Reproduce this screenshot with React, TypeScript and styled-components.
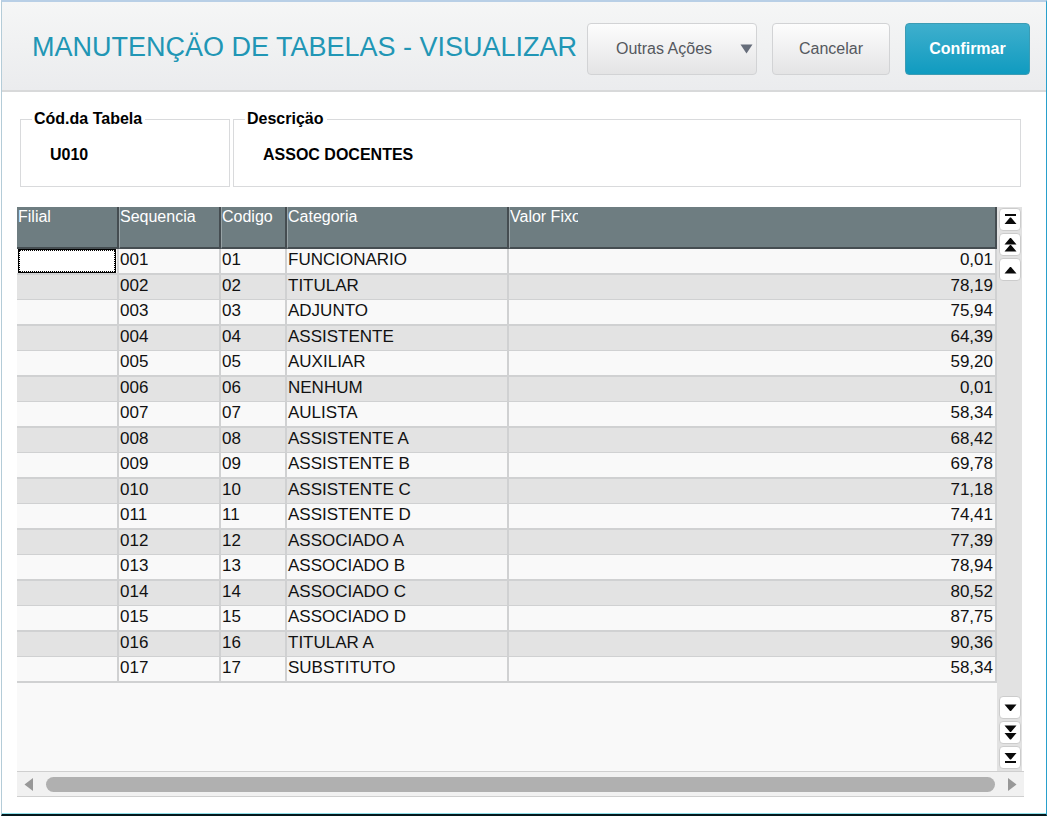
import React from "react";
import styled, { createGlobalStyle, css } from "styled-components";

const Global = createGlobalStyle`
  *, *::before, *::after { box-sizing: border-box; }
  html, body, #root { height: 100%; }
  body { margin: 0; background: #fff; font-family: "Liberation Sans", Arial, sans-serif; }
  button, input { font-family: inherit; margin: 0; }
`;

const Window = styled.main`
  min-height: 100%;
  display: flex;
  flex-direction: column;
  border-style: solid;
  border-width: 2px 1px 2px 1px;
  border-color: #b8cfe6 #29a0cc #04181c #b4ccd8;
  margin-left: 1px;
  background: #fff;
  box-shadow: inset 0 -1px 0 #8fe0ea;
`;

const Header = styled.header`
  display: flex;
  align-items: flex-start;
  justify-content: space-between;
  height: 90px;
  padding: 21px 16px 0 30px;
  border-bottom: 2px solid #d8d9da;
  background: linear-gradient(#f5f6f6, #ebecee);
`;

const Title = styled.h1`
  margin: 0;
  font-size: 27px;
  line-height: 48px;
  font-weight: 400;
  color: #2196b5;
  white-space: nowrap;
`;

const Actions = styled.div`
  display: flex;
  flex-shrink: 0;
  gap: 15px;
`;

const Button = styled.button<{ $primary?: boolean; $width: number }>`
  display: flex;
  align-items: center;
  justify-content: center;
  width: ${(p) => p.$width}px;
  height: 52px;
  padding: 0;
  border: 1px solid #d2d3d5;
  border-radius: 4px;
  background: linear-gradient(#fdfdfd, #e4e4e5);
  color: #55585e;
  font-size: 16px;
  ${(p) =>
    p.$primary &&
    css`
      border-color: #3c9cb4;
      background: linear-gradient(#3fafcd, #109bc0);
      color: #fff;
      font-weight: 700;
    `}
`;

const MenuButton = styled(Button)`
  justify-content: space-between;
  padding: 0 3px 0 28px;
`;

const Content = styled.div`
  flex: 1;
  display: flex;
  flex-direction: column;
  padding: 18px 22px 17px 15px;
`;

const Fields = styled.div`
  display: flex;
  gap: 3px;
  padding: 0 3px;
`;

const Field = styled.fieldset<{ $grow?: boolean }>`
  flex: ${(p) => (p.$grow ? "1" : "0 0 210px")};
  min-width: 0;
  height: 77px;
  margin: 0;
  padding: 17px 28px 0 29px;
  border: 1px solid #d9dadc;
`;

const Legend = styled.legend`
  margin-left: -18px;
  padding: 0 3px 0 2px;
  font-size: 16px;
  line-height: 18px;
  font-weight: 700;
  color: #000;
`;

const Value = styled.input`
  display: block;
  width: 100%;
  height: 20px;
  padding: 0;
  border: 0;
  outline: 0;
  background: transparent;
  font-size: 16px;
  font-weight: 700;
  color: #000;
`;

const Grid = styled.section`
  flex: 1;
  display: flex;
  flex-direction: column;
  margin-top: 20px;
`;

const GridBody = styled.div`
  flex: 1;
  display: flex;
  margin-right: 2px;
  background: #f9f9f9;
`;

const TableArea = styled.div`
  flex: 1;
  min-width: 0;
`;

const Table = styled.table`
  width: 100%;
  table-layout: fixed;
  border-collapse: separate;
  border-spacing: 0;
  font-size: 17px;
  color: #111;
`;

const Th = styled.th`
  height: 42px;
  padding: 0 0 0 1px;
  border-right: 2px solid #454d51;
  border-bottom: 2px solid #454d51;
  background: #6e7d81;
  color: #fff;
  font-size: 16px;
  font-weight: 400;
  line-height: 19px;
  text-align: left;
  vertical-align: top;
  white-space: nowrap;

  & + & {
    padding-left: 0;
    border-left: 1px solid #98a3a6;
  }
`;

const Clip = styled.span`
  display: block;
  width: 68px;
  overflow: hidden;
`;

const Row = styled.tr`
  height: 26px;
  background: #f9f9f9;

  & > td {
    border-bottom: 2px solid #d0d1d2;
  }
  &:nth-child(even) {
    height: 25px;
    background: #e3e3e3;
  }
  &:nth-child(even) > td {
    border-bottom-width: 1px;
  }
`;

const Td = styled.td<{ $right?: boolean }>`
  padding: 0 2px 2px 1px;
  border-right: 2px solid #d0d1d2;
  line-height: 20px;
  text-align: ${(p) => (p.$right ? "right" : "left")};
  white-space: nowrap;
`;

const FocusCell = styled(Td)`
  padding: 0 1px 0 1px;
`;

const Focus = styled.div`
  height: 24px;
  border: 1px solid #000;
  outline: 1px dotted #000;
  outline-offset: -2px;
  background: #fff;
`;

const VScroll = styled.div`
  flex: 0 0 25px;
  display: flex;
  flex-direction: column;
  justify-content: space-between;
  padding: 1px 1px 2px 2px;
  background: #e2e2e2;
`;

const ButtonStack = styled.div`
  display: flex;
  flex-direction: column;
  gap: 2px;
`;

const ScrollButton = styled.button`
  display: flex;
  align-items: center;
  justify-content: center;
  width: 22px;
  height: 23px;
  padding: 0;
  border: 1px solid #ccc;
  border-radius: 4px;
  background: #fff;
`;

const HScroll = styled.div`
  flex: 0 0 26px;
  display: flex;
  align-items: center;
  gap: 12px;
  padding: 0 7px;
  border-top: 1px solid #cfcfcf;
  border-bottom: 1px solid #cfcfcf;
  background: #f1f1f1;
`;

const ArrowButton = styled.button`
  display: flex;
  padding: 0;
  border: 0;
  background: transparent;
`;

const Thumb = styled.div`
  flex: 1;
  height: 15px;
  border-radius: 8px;
  background: #b0b0b0;
`;

const glyphs: Record<string, string> = {
  "Primeira linha": "M1 2h11v2H1z M6 5.500h1L12.500 12H0.500z",
  "Página anterior": "M6 1h1L12.500 7.500H0.500z M6 8h1L12.500 14.500H0.500z",
  "Linha anterior": "M6 5h1L12.500 11.500H0.500z",
  "Próxima linha": "M0.500 4.500h12L7 11H6z",
  "Próxima página": "M0.500 0.500h12L7 7H6z M0.500 8h12L7 14.500H6z",
  "Última linha": "M0.500 3h12L7 9.500H6z M1 11h11v2H1z",
};

const Scroll = ({ label }: { label: string }) => (
  <ScrollButton type="button" aria-label={label}>
    <svg width="13" height="15" viewBox="0 0 13 15" fill="#0a0a0a">
      <path d={glyphs[label]} />
    </svg>
  </ScrollButton>
);

const rows: [string, string][] = [
  ["FUNCIONARIO", "0,01"],
  ["TITULAR", "78,19"],
  ["ADJUNTO", "75,94"],
  ["ASSISTENTE", "64,39"],
  ["AUXILIAR", "59,20"],
  ["NENHUM", "0,01"],
  ["AULISTA", "58,34"],
  ["ASSISTENTE A", "68,42"],
  ["ASSISTENTE B", "69,78"],
  ["ASSISTENTE C", "71,18"],
  ["ASSISTENTE D", "74,41"],
  ["ASSOCIADO A", "77,39"],
  ["ASSOCIADO B", "78,94"],
  ["ASSOCIADO C", "80,52"],
  ["ASSOCIADO D", "87,75"],
  ["TITULAR A", "90,36"],
  ["SUBSTITUTO", "58,34"],
];

export default function App() {
  return (
    <>
      <Global />
      <Window>
        <Header>
          <Title>MANUTENÇÄO DE TABELAS - VISUALIZAR</Title>
          <Actions>
            <MenuButton type="button" $width={170} aria-haspopup="menu">
              Outras Ações
              <svg width="13" height="10" viewBox="0 0 13 10" fill="#666d7a">
                <path d="M0.500 0.500h12L6.500 9.500z" />
              </svg>
            </MenuButton>
            <Button type="button" $width={118}>Cancelar</Button>
            <Button type="button" $width={125} $primary>Confirmar</Button>
          </Actions>
        </Header>
        <Content>
          <Fields>
            <Field>
              <Legend><label htmlFor="codigo">Cód.da Tabela</label></Legend>
              <Value id="codigo" defaultValue="U010" readOnly />
            </Field>
            <Field $grow>
              <Legend><label htmlFor="descricao">Descriçäo</label></Legend>
              <Value id="descricao" defaultValue="ASSOC DOCENTES" readOnly />
            </Field>
          </Fields>
          <Grid>
            <GridBody>
              <TableArea>
                <Table>
                  <colgroup>
                    <col style={{ width: 102 }} />
                    <col style={{ width: 102 }} />
                    <col style={{ width: 66 }} />
                    <col style={{ width: 222 }} />
                    <col />
                  </colgroup>
                  <thead>
                    <tr>
                      <Th>Filial</Th>
                      <Th>Sequencia</Th>
                      <Th>Codigo</Th>
                      <Th>Categoria</Th>
                      <Th><Clip>Valor Fixo</Clip></Th>
                    </tr>
                  </thead>
                  <tbody>
                    {rows.map(([name, value], i) => {
                      const n = String(i + 1);
                      return (
                        <Row key={n}>
                          {i === 0 ? <FocusCell><Focus /></FocusCell> : <Td />}
                          <Td>{n.padStart(3, "0")}</Td>
                          <Td>{n.padStart(2, "0")}</Td>
                          <Td>{name}</Td>
                          <Td $right>{value}</Td>
                        </Row>
                      );
                    })}
                  </tbody>
                </Table>
              </TableArea>
              <VScroll>
                <ButtonStack>
                  <Scroll label="Primeira linha" />
                  <Scroll label="Página anterior" />
                  <Scroll label="Linha anterior" />
                </ButtonStack>
                <ButtonStack>
                  <Scroll label="Próxima linha" />
                  <Scroll label="Próxima página" />
                  <Scroll label="Última linha" />
                </ButtonStack>
              </VScroll>
            </GridBody>
            <HScroll>
              <ArrowButton type="button" aria-label="Rolar para a esquerda">
                <svg width="10" height="13" viewBox="0 0 10 13" fill="#989898">
                  <path d="M9 0v13L0.500 6.500z" />
                </svg>
              </ArrowButton>
              <Thumb />
              <ArrowButton type="button" aria-label="Rolar para a direita">
                <svg width="10" height="13" viewBox="0 0 10 13" fill="#989898">
                  <path d="M1 0v13L9.500 6.500z" />
                </svg>
              </ArrowButton>
            </HScroll>
          </Grid>
        </Content>
      </Window>
    </>
  );
}
